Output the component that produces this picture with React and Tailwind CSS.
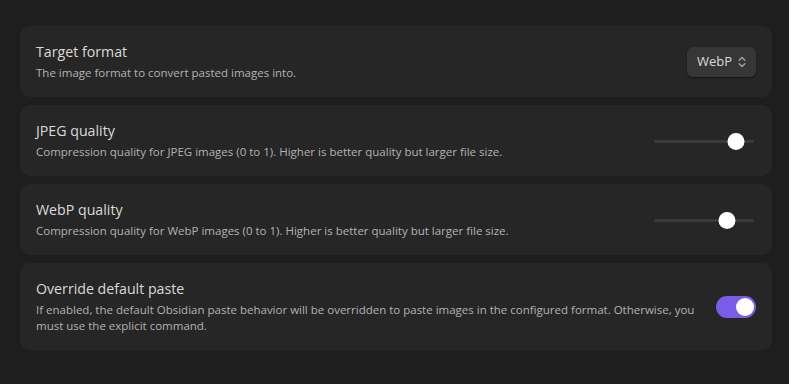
import React from "react";

const font = { fontFamily: '"Open Sans", "Noto Sans", sans-serif' };

function Card({ title, desc, children }) {
  return (
    <div className="flex items-center justify-between rounded-[10px] bg-[#262626] px-4 py-4">
      <div className="flex min-w-0 flex-1 flex-col pr-3">
        <div className="text-[14.2px] leading-5 text-[#dadada]">{title}</div>
        <div className="mt-[3px] text-[11.5px] leading-4 text-[#b3b3b3]">{desc}</div>
      </div>
      <div className="flex shrink-0 items-center">{children}</div>
    </div>
  );
}

function Slider({ pos }) {
  return (
    <div className="relative mr-[2px] h-4 w-[100px]">
      <div className="absolute left-0 right-0 top-[7px] h-[3px] rounded-full bg-[#3a3a3a]" />
      <div
        className="absolute top-0 h-[17px] w-[17px] -translate-x-1/2 rounded-full bg-white"
        style={{ left: pos }}
      />
    </div>
  );
}

export default function App() {
  return (
    <div className="min-h-[384px] w-[789px] bg-[#1e1e1e] pl-5 pt-[26px]" style={font}>
      <div className="flex w-[752px] flex-col gap-2">
        <Card title="Target format" desc="The image format to convert pasted images into.">
          <div className="flex h-[30px] w-[69px] items-center justify-between rounded-[6px] bg-[#363636] pl-[10px] pr-[10px] shadow-[0_1px_2px_rgba(0,0,0,0.5)]">
            <span className="text-[13px] text-[#dadada]">WebP</span>
            <svg width="8" height="12" viewBox="0 0 8 12" fill="none" stroke="#a8a8a8" strokeWidth="1.3" strokeLinecap="round" strokeLinejoin="round">
              <path d="M1.2 4.2 L4 1.5 L6.8 4.2" />
              <path d="M1.2 7.8 L4 10.5 L6.8 7.8" />
            </svg>
          </div>
        </Card>
        <Card
          title="JPEG quality"
          desc="Compression quality for JPEG images (0 to 1). Higher is better quality but larger file size."
        >
          <Slider pos={82} />
        </Card>
        <Card
          title="WebP quality"
          desc="Compression quality for WebP images (0 to 1). Higher is better quality but larger file size."
        >
          <Slider pos={73} />
        </Card>
        <Card
          title="Override default paste"
          desc="If enabled, the default Obsidian paste behavior will be overridden to paste images in the configured format. Otherwise, you must use the explicit command."
        >
          <div className="relative h-[22px] w-[40px] rounded-full bg-[#7b5ce6]">
            <div className="absolute right-[2px] top-[2px] h-[18px] w-[18px] rounded-full bg-white" />
          </div>
        </Card>
      </div>
    </div>
  );
}
